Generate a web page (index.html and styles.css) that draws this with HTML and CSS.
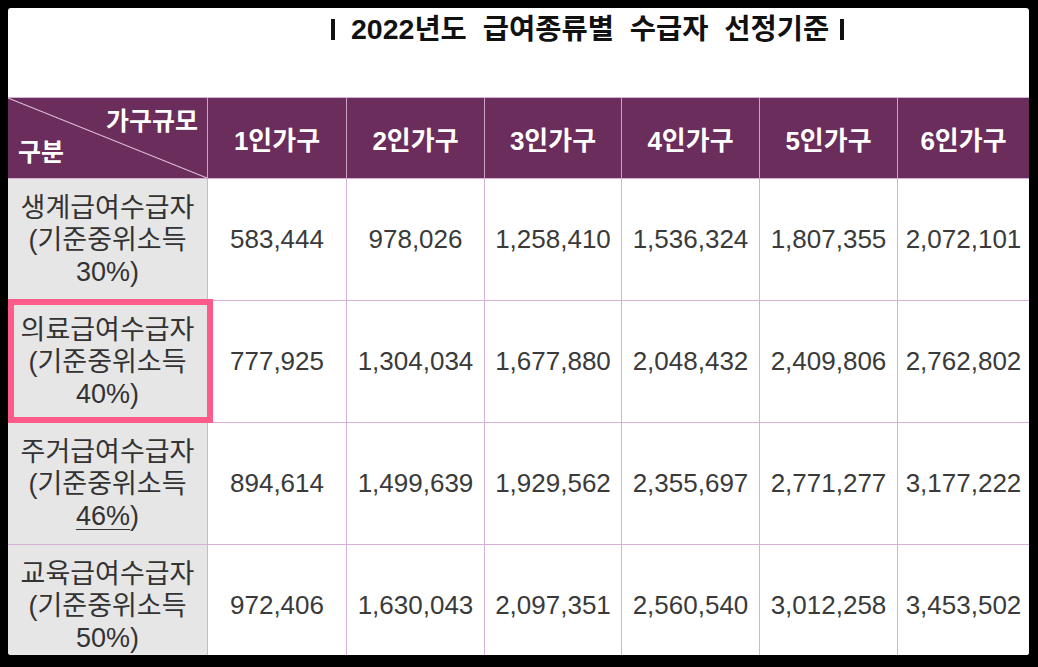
FILE: index.html
```html
<!DOCTYPE html>
<html lang="ko">
<head>
<meta charset="utf-8">
<title>2022년도 급여종류별 수급자 선정기준</title>
<link rel="stylesheet" href="styles.css">
</head>
<body>
<div class="panel">
  <div class="title">
    <span class="bar"></span>
    <h1 class="title-text">2022년도 급여종류별 수급자 선정기준</h1>
    <span class="bar"></span>
  </div>
  <div class="table">
    <div class="cell head corner">
      <span class="corner-top">가구규모</span>
      <span class="corner-bottom">구분</span>
    </div>
    <div class="cell head">1인가구</div>
    <div class="cell head">2인가구</div>
    <div class="cell head">3인가구</div>
    <div class="cell head">4인가구</div>
    <div class="cell head">5인가구</div>
    <div class="cell head">6인가구</div>

    <div class="cell label"><p class="label-text">생계급여수급자<br>(기준중위소득<br>30%)</p></div>
    <div class="cell num">583,444</div>
    <div class="cell num">978,026</div>
    <div class="cell num">1,258,410</div>
    <div class="cell num">1,536,324</div>
    <div class="cell num">1,807,355</div>
    <div class="cell num">2,072,101</div>

    <div class="cell label"><p class="label-text">의료급여수급자<br>(기준중위소득<br>40%)</p></div>
    <div class="cell num">777,925</div>
    <div class="cell num">1,304,034</div>
    <div class="cell num">1,677,880</div>
    <div class="cell num">2,048,432</div>
    <div class="cell num">2,409,806</div>
    <div class="cell num">2,762,802</div>

    <div class="cell label"><p class="label-text">주거급여수급자<br>(기준중위소득<br><span class="ul">46%</span>)</p></div>
    <div class="cell num">894,614</div>
    <div class="cell num">1,499,639</div>
    <div class="cell num">1,929,562</div>
    <div class="cell num">2,355,697</div>
    <div class="cell num">2,771,277</div>
    <div class="cell num">3,177,222</div>

    <div class="cell label"><p class="label-text">교육급여수급자<br>(기준중위소득<br>50%)</p></div>
    <div class="cell num">972,406</div>
    <div class="cell num">1,630,043</div>
    <div class="cell num">2,097,351</div>
    <div class="cell num">2,560,540</div>
    <div class="cell num">3,012,258</div>
    <div class="cell num">3,453,502</div>

    <div class="highlight"></div>
  </div>
</div>
</body>
</html>
```

FILE: styles.css
```css
html, body {
  margin: 0;
  padding: 0;
  background: #000;
}
body {
  padding: 8px 9px 12px 8px;
  font-family: "Liberation Sans", "Noto Sans CJK KR", sans-serif;
}
.panel {
  width: 1021px;
  height: 647px;
  background: #fff;
  border-radius: 3px;
  overflow: hidden;
}
.title {
  height: 89px;
  box-sizing: border-box;
  padding: 3px 0 0 323px;
  display: flex;
  align-items: flex-start;
}
.bar {
  display: inline-block;
  width: 4px;
  height: 21px;
  margin-top: 8px;
  background: #111;
}
.title-text {
  margin: 0 11px 0 16px;
  font-size: 28.5px;
  font-weight: bold;
  line-height: 36px;
  color: #111;
  word-spacing: 8px;
  white-space: nowrap;
}
.table {
  position: relative;
  display: grid;
  grid-template-columns: 200px 139px 138px 137px 138px 138px 132px;
  grid-template-rows: 81px repeat(4, 122px);
  border-top: 1px solid #d6b3d4;
}
.cell {
  box-sizing: border-box;
  border-right: 1px solid #d6b1d5;
  border-bottom: 1px solid #d6b1d5;
  display: flex;
  align-items: center;
  justify-content: center;
  text-align: center;
}
.head {
  background: #6b2d5b;
  color: #fff;
  font-size: 26px;
  font-weight: bold;
  border-right-color: #c9a2c4;
}
.corner {
  flex-direction: column;
  align-items: stretch;
  justify-content: space-between;
  padding: 8px 9px 11px 10px;
  font-size: 25px;
  line-height: 31px;
  background: linear-gradient(to top right, #6b2d5b calc(50% - 1px), #e3c4dc 50%, #6b2d5b calc(50% + 1px));
}
.corner-top {
  text-align: right;
}
.corner-bottom {
  text-align: left;
}
.label {
  background: #e6e6e6;
  color: #333;
}
.label-text {
  margin: 0;
  font-size: 27px;
  line-height: 32px;
  white-space: nowrap;
}
.num {
  color: #3a3a3a;
  font-size: 26px;
  background: #fff;
}
.ul {
  text-decoration: underline;
  text-decoration-thickness: 1px;
  text-underline-offset: 4px;
}
.highlight {
  position: absolute;
  left: 0;
  top: 201px;
  width: 205px;
  height: 124px;
  box-sizing: border-box;
  border: 6px solid #fd5b8a;
  pointer-events: none;
}
```
